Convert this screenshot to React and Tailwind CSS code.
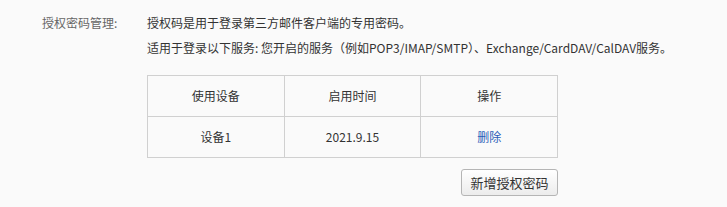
export default function App() {
  const font = { fontFamily: '"Noto Sans CJK SC", "Noto Sans", sans-serif' };
  return (
    <div className="w-[727px] h-[207px] bg-[#fafafa] text-[12px]" style={font}>
      <div className="flex pl-[42px] pt-[10px]">
        <div className="w-[105px] leading-[25px] text-[#666]">授权密码管理:</div>
        <div className="flex flex-col">
          <div className="leading-[25px] text-[#333]">授权码是用于登录第三方邮件客户端的专用密码。</div>
          <div className="leading-[25px] text-[#333]">
            适用于登录以下服务: 您开启的服务（例如POP3/IMAP/SMTP）、Exchange/CardDAV/CalDAV服务。
          </div>
          <div className="mt-[15px] w-[411px] flex flex-col">
            <table className="w-[411px] border-collapse text-[#333] table-fixed">
              <tbody>
                <tr className="h-[41px]">
                  <td className="border border-[#d0d0d0] text-center p-0">使用设备</td>
                  <td className="border border-[#d0d0d0] text-center p-0">启用时间</td>
                  <td className="border border-[#d0d0d0] text-center p-0">操作</td>
                </tr>
                <tr className="h-[41px]">
                  <td className="border border-[#d0d0d0] text-center p-0">设备1</td>
                  <td className="border border-[#d0d0d0] text-center p-0">2021.9.15</td>
                  <td className="border border-[#d0d0d0] text-center p-0">
                    <a className="text-[#2b5db8] cursor-pointer">删除</a>
                  </td>
                </tr>
              </tbody>
            </table>
            <div className="flex justify-end mt-[11px]">
              <button className="w-[97px] h-[27px] border border-[#b5b5b5] rounded-[3px] bg-gradient-to-b from-[#ffffff] to-[#ececec] text-[#333] text-[13px] leading-none">
                新增授权密码
              </button>
            </div>
          </div>
        </div>
      </div>
    </div>
  );
}
